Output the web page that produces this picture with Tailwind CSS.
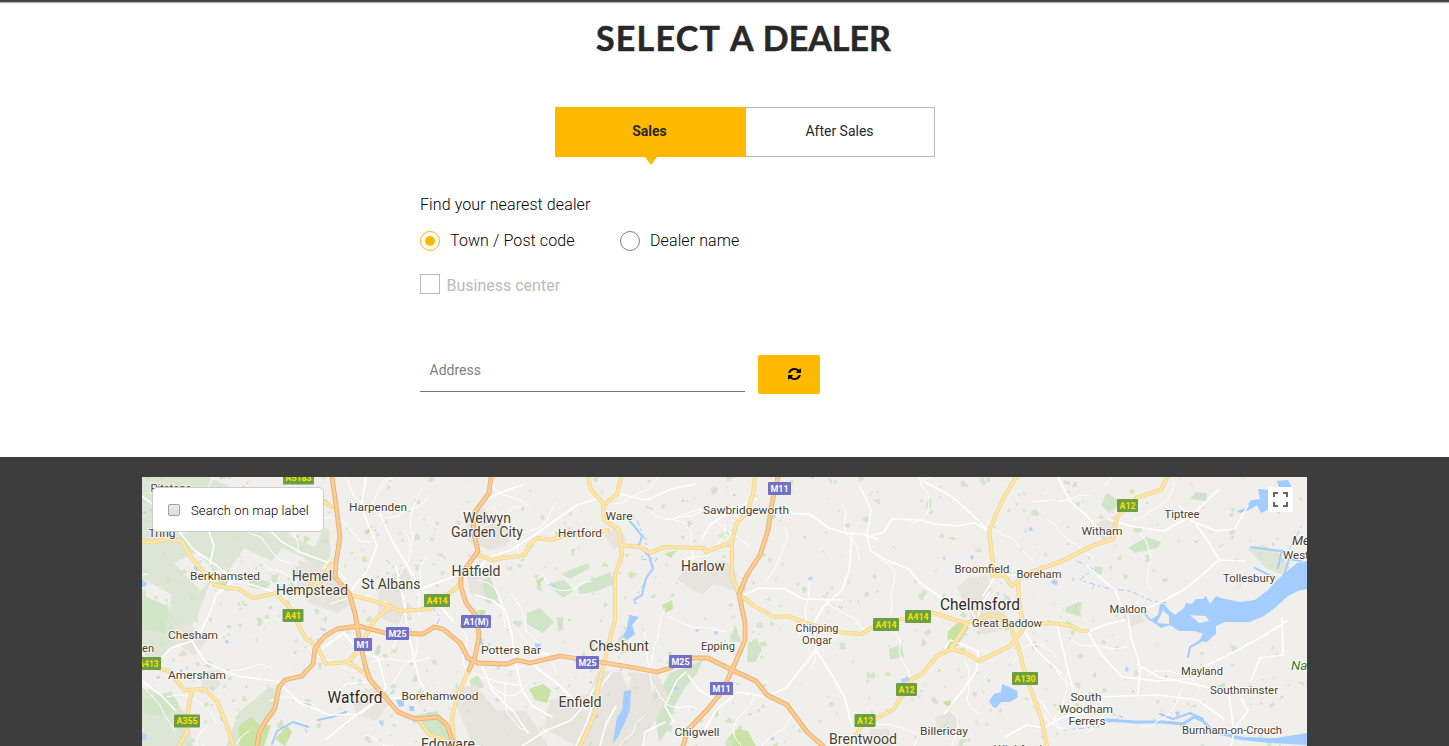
<!DOCTYPE html>
<html lang="en">
<head>
<meta charset="utf-8">
<title>Select a dealer</title>
<script src="https://cdn.jsdelivr.net/npm/@tailwindcss/browser@4"></script>
</head>
<body class="h-[746px] overflow-hidden bg-white font-['Roboto',sans-serif] text-[#282828]">
<div class="h-[4px] border-b border-[#ececec] bg-[#b5b5b5]"><div class="h-[2px] bg-[#444]"></div></div>
<main class="flex h-[453px] flex-col">
  <h1 class="mt-[14px] ml-[596px] h-10 whitespace-nowrap font-['Lato',sans-serif] text-[34px] leading-10 font-bold [word-spacing:2px] [-webkit-text-stroke:0.5px_#282828]"><span class="tracking-[1.2px]">SELECT</span> A DEALER</h1>
  <div class="mt-[49px] ml-[555px] flex h-[50px] w-[380px] text-center text-[14px] leading-[48px]">
    <div class="relative w-[191px] bg-[#ffb900] pr-[2px] font-bold">Sales
      <svg class="absolute top-[50px] left-[90px]" width="12" height="8"><path d="M0 0H12L6 8Z" fill="#ffb900"/></svg>
    </div>
    <div class="flex-1 border border-l-0 border-[#b9b9b9] pr-px leading-[46px]">After Sales</div>
  </div>
  <div class="ml-[420px] w-[400px] text-[16px] leading-6">
    <p class="mt-[36px] font-light tracking-[0.1px] text-black">Find your nearest dealer</p>
    <div class="mt-3 flex items-center font-light tracking-[0.1px] text-black">
      <div class="flex w-[200px] items-center gap-[10px]"><span class="flex size-5 items-center justify-center rounded-full border border-[#ffb900]"><span class="size-[10px] rounded-full bg-[#ffb900]"></span></span>Town / Post code</div>
      <div class="flex items-center gap-[10px] whitespace-nowrap"><span class="size-5 rounded-full border border-[#808080]"></span>Dealer name</div>
    </div>
    <div class="mt-[21px] flex text-[#bbb]"><span class="mr-[6.5px] size-5 border border-[#bbb]"></span>Business center</div>
    <div class="mt-[57px] flex h-[39px] justify-between">
      <div class="h-[37px] w-[325px] border-b border-[#777] pl-[9.5px] text-[14px] leading-[30px] text-[#808080]">Address</div>
      <button class="flex w-[62px] items-center justify-end rounded-[2px] bg-[#ffb900] pr-[19px] pb-px" aria-label="Refresh">
        <svg width="13" height="12" viewBox="0 0 1536 1536" preserveAspectRatio="none"><path fill="#000" d="M1511 928q0 5-1 7-64 268-268 434.500T764 1536q-146 0-282.500-55T238 1324l-129 129q-19 19-45 19t-45-19-19-45V960q0-26 19-45t45-19h448q26 0 45 19t19 45-19 45l-137 137q71 66 161 102t187 36q134 0 250-65t186-179q11-17 53-117 8-23 30-23h192q13 0 22.500 9.500t9.500 22.500zm25-800v448q0 26-19 45t-45 19h-448q-26 0-45-19t-19-45 19-45l138-138Q969 256 768 256q-134 0-250 65T332 500q-11 17-53 117-8 23-30 23H50q-13 0-22.500-9.500T18 608v-7q65-268 270-434.500T768 0q146 0 284 55.500T1297 212l130-129q19-19 45-19t45 19 19 45z"/></svg>
      </button>
    </div>
  </div>
</main>
<section class="h-[289px] bg-[#3d3d3d] pt-5 pl-[142px]">
  <div class="relative h-[269px] w-[1165px] overflow-hidden bg-[#f0efeb]">
    <svg class="block" width="1165" height="269" viewBox="142 477 1165 269" fill="none" stroke-linejoin="round" stroke-linecap="round">
      <!-- woodland and hills -->
      <g fill="#dde6d4">
        <path d="M142 477H208L233 488 283 510 329 530 331 556 320 570 302 557 282 548 272 561 244 548 229 570 215 570 204 598 197 618 184 636 165 655 142 668Z"/>
        <path d="M142 688L169 698 187 714 193 746H142Z"/><path d="M269 687L280 690 276 714 249 746H226L238 713Z"/>
        <path d="M1247 548L1263 545 1277 551 1290 567 1284 576 1266 568Z"/>
      </g>
      <g fill="#f0efeb"><path d="M174 563L198 552 215 573 201 591ZM145 580L171 594 170 610 147 607ZM163 510L182 505 199 527 180 535ZM292 510L323 528 315 547 289 536Z"/></g>
      <g fill="#d0e4c8">
        <path d="M142 595L169 607 166 633 142 629ZM144 701L171 691 180 707 166 718 142 712ZM217 580L229 576 226 591ZM250 575L271 583 266 590 249 587Z"/>
        <path d="M670 673L686 667 703 660 697 673 684 689 675 705 668 730 659 742 656 722 648 711ZM748 643L757 638 762 650 755 662 747 662ZM735 624L741 642 730 642ZM578 588L590 580 610 572 615 583 598 591 579 594ZM561 574L588 563 590 568 570 579ZM547 584L564 580 574 590 563 598ZM527 613L540 608 554 622 543 633 527 624ZM482 580L490 577 498 598 489 604 480 596ZM412 716L437 711 449 730 451 741 427 735ZM1128 548L1146 537 1161 542 1157 548 1135 553ZM1066 607L1079 602 1081 617 1065 612ZM889 649L902 644 904 657 890 660ZM1106 493L1121 501 1110 513 1101 505ZM557 617H563V629L558 632ZM470 680L478 675 484 687 472 691ZM1196 492L1207 493 1206 501 1190 499Z"/>
      </g>
      <g fill="#c8e3a4">
        <path d="M238 727L251 717 261 726 271 725 264 746H240ZM529 689L543 684 551 690 547 703 535 700ZM727 739L737 729 748 731 756 746H726ZM948 631L961 620 969 628 957 646 947 650ZM664 554L677 550 671 558ZM536 580L545 577 538 587ZM662 605L672 600 673 609 665 613ZM275 739L287 725 292 732 285 746ZM477 610L486 610 483 621ZM364 532L373 525 368 535ZM942 702L951 700 951 709ZM1074 605L1082 602 1078 614Z"/>
      </g>
      <!-- built-up areas -->
      <g fill="#e7e4de">
        <path d="M292 572L304 561 335 574 352 603 338 613 309 603ZM379 585L405 566 411 578 401 595 413 607 399 626 378 617ZM466 518L483 508 498 523 513 532 506 546 490 550 468 542ZM466 573L482 574 485 600 471 595ZM604 535L618 525 627 540 614 550ZM677 579L690 562 727 561 737 573 736 591 714 584 702 594 693 590ZM957 587L967 579 987 575 993 592 981 602 962 599ZM966 605L989 606 1005 612 1003 630 981 635 972 620ZM1122 616L1140 613 1145 622 1131 626ZM1095 524L1115 516 1117 538 1102 541ZM550 700L588 694 598 671 620 672 632 695 620 746H575L544 728ZM632 672L658 675 668 696 641 746H620ZM350 697L379 685 392 699 376 721 357 715ZM935 717L950 712 961 721 950 737 937 730ZM870 729L889 729 893 746H867ZM450 690L475 685 496 710 526 711 548 746H473ZM167 630L190 624 208 640 194 656 178 644ZM202 671L220 670 218 689 202 690Z"/>
      </g>
      <g id="patches"></g>
      <!-- water -->
      <g fill="#a3ccff">
        <path d="M1307 561L1297 563 1290 569 1278 579 1268 590 1255 600 1240 602 1221 598 1216 596 1210 604 1206 596 1203 599 1196 599 1192 604 1186 603 1184 608 1175 615 1169 610 1164 604 1160 604 1158 615 1150 620 1161 628 1170 625 1179 631 1195 631 1203 634 1199 641 1207 642 1213 636 1216 634 1216 626 1225 622 1249 622 1264 616 1276 607 1288 596 1298 591 1307 589Z"/>
        <path d="M1237 511L1245 508 1251 500 1260 499 1258 489 1269 490V509L1261 513 1257 505 1251 509 1240 513ZM1277 481L1288 480 1293 489 1280 491Z"/>
        <path d="M989 701L994 694 1001 692 1002 684 1009 687 1017 691 1018 697 1010 702 1001 702 996 708 993 707ZM624 691L631 690 630 710 624 724 618 737 613 743 617 717 622 711ZM396 700L404 699 404 706 399 707ZM409 706H414V711H410Z"/>
        <path d="M629 615L639 617 632 625 635 634 627 640 623 636 627 628ZM1230 735L1245 737 1275 738 1307 733V745L1269 743 1232 739Z"/>
      </g>
      <g fill="#f0efeb"><path d="M1163 610L1169 616 1169 624 1157 623ZM1190 615L1206 616 1209 621 1199 623Z"/></g>
      <g stroke="#a3ccff">
        <path stroke-width="3" d="M1106 720L1135 722 1163 722 1183 724 1194 717 1203 721 1214 732 1232 736"/>
        <path stroke-width="2" d="M624 514L634 526 642 536 639 546 649 556 653 569 646 578 642 595 634 600M1160 714L1173 719 1190 713 1203 719M1201 641L1190 647 1188 657M1150 620L1142 610M1284 575L1289 559 1301 561M1255 568L1275 578M1282 550L1278 568M1251 547L1280 551M272 744L277 731 293 722 308 727M318 720L332 717 346 712"/>
        <path stroke-width="1" stroke-dasharray="5 4 2 4" d="M1077 561L1093 569 1080 580 1106 588 1130 591 1152 601 1168 603M624 514L637 520 648 548 640 560 657 558 646 580 636 597M432 607L440 617 436 627M479 550L475 558M142 514L155 508M386 560L397 570M1064 730L1096 727 1123 717 1112 714M1282 562L1296 537 1301 527"/>
      </g>
      <g id="lanes" stroke="#fff" stroke-width="1"></g>
      <!-- local roads -->
      <g stroke="#fff" stroke-width="1.6">
        <path d="M177 529L194 550 216 565 232 579 269 590 285 598M259 520L282 542 302 553 332 564 345 579M216 595L208 617 201 631 192 641 205 662 237 676 273 681M142 681L162 696 175 710M192 641L171 648 152 668M216 595L229 584 244 573M142 496L168 516 177 529M210 564L214 546 207 526M349 593L367 571 377 546 368 524 361 506 366 477M321 649L344 633 358 650 378 658 386 688 370 705 351 719 326 739M276 680L300 703 330 715 361 714 378 700 413 696"/>
        <path d="M380 514L392 541 407 565 420 588 436 601 453 621M396 566L404 604 408 632 419 680 427 693M420 589L467 572M476 570L492 556 511 550 533 536 557 519 577 505 597 499M475 511L483 500 507 490 523 485M475 595L492 600 505 610 512 634 514 656 522 690 533 706 552 717M482 665L492 690 504 703 513 711 528 733M533 665L558 684 570 696 588 710M594 688L585 705 570 721 547 730 522 746M611 673L597 691 587 722 576 746M616 706L606 724 600 746"/>
        <path d="M620 494L646 500 672 489 695 484M702 538L711 524 734 509 757 499M780 513L809 514 829 528 845 533 862 534 878 539M852 534L849 571 842 590 823 607 814 623M739 597L760 588 785 589 803 599 842 600M814 623L816 650 832 675 845 698 852 727M816 650L805 664 786 688 766 697 738 692 717 709 700 737M674 722L665 706 677 680 686 672M643 746L645 732 665 722M688 675L699 690 718 701M867 537L871 551 884 559 909 569 920 583 943 599 968 605M867 537L884 532 892 519 921 520 934 524 957 526 975 523 988 531M860 486L871 510 867 534M990 532L967 510 951 496 925 482M983 596L996 575 1016 575M969 608L977 621 981 604 990 592"/>
        <path d="M1058 477L1070 501 1091 520 1099 530M1108 519L1130 526 1164 531 1191 516 1219 489M1180 506L1195 523 1210 544 1219 560 1245 561M1219 560L1204 573 1185 589 1163 601 1142 611 1122 607 1115 590 1086 565M1191 521L1217 531 1235 529 1248 505M1128 616L1131 638 1140 666 1138 695M1088 632L1107 624 1125 620M1088 632L1101 654 1122 677 1158 681 1201 678M1138 665L1159 677 1203 686 1229 695 1233 726M1201 668L1230 654 1260 638 1287 621M1282 618L1283 655 1260 658 1251 680M1057 625L1067 666 1073 690M1038 620L1025 632 1036 650 1061 673M944 650L950 640 978 651 977 670 963 690 944 714M1044 728L1027 725 1005 737M1044 728L1060 718 1088 712M1231 746L1235 728 1248 711 1241 698M1096 697L1158 695 1198 700 1224 719"/>
      </g>
      <!-- primary roads: darker casing under a pale fill -->
      <defs><g id="primary">
        <path d="M142 542L156 542 167 539 182 541 191 557 204 573 215 585 229 588 239 589 253 598 276 593 291 609 299 626 306 639 317 646 326 664 348 662 363 672 375 684"/>
        <path d="M348 662L359 650 367 634 375 620 385 611 391 607M349 595L367 599 386 605 400 611 430 609 457 587 461 581M331 563L322 580 308 588 291 593M332 507L317 497 303 489"/>
        <path d="M142 664L169 671 184 690 204 689 217 701 226 723 234 746M192 690L188 710 188 730 179 746"/>
        <path d="M478 555L491 560 525 555 529 545 537 538 552 540 563 536 591 534 608 530M588 477L591 490 603 503 604 520 619 530 622 555 615 575 615 620 607 650 597 693 595 714 580 746M621 478L617 494 604 505M621 545L640 547 650 553 664 547 704 548 706 552 732 542 736 524 747 512 753 494 755 477M732 542L732 576 739 594 754 606 774 617 788 616 803 622 835 632 862 634 877 624 908 618 934 613 965 623 976 620 989 615 1004 617 1011 628 1018 646 1023 666 1031 690 1041 717 1047 746"/>
        <path d="M1016 477L1003 499 989 531 993 563 992 576 1004 575 1012 586 1024 575 1062 561 1092 546 1113 539 1117 517 1138 497 1161 490 1167 477M1018 582L1019 603 1024 628 1010 646 979 661 966 653 951 649 967 624M951 649L937 656 922 674 912 679 894 709 862 726 849 746M1024 626L1047 623 1060 624 1072 626 1081 631 1087 631M469 670L457 697 452 717 454 746M419 721L430 735 444 739"/>
      </g>
      <g id="motorways">
        <path d="M332 477L336 505 340 537 336 562 335 577 349 593 355 613 359 637 365 665 370 680 386 698 398 712 415 719 438 717 447 725 452 740 460 746M257 746L259 733 267 719 275 708 279 687 285 680 302 676 313 664 315 648 325 636 337 629 359 626 385 633 423 634 434 627 443 629 460 643 468 658 478 663 507 664 517 660 530 663 560 656 587 660 630 667 657 672 670 668 687 658 708 658 732 670 756 681 767 695 787 705 807 732 823 746M491 477L489 493 475 512 473 530 478 551 461 575 461 587 466 603 477 617 479 637 475 657 469 670M778 477L772 503 768 530 760 555 747 575 739 594 745 623 745 640 732 670 722 692 707 710 688 730 683 746"/>
      </g></defs>
      <use href="#primary" stroke="#f3d48c" stroke-width="4.2"/>
      <use href="#primary" stroke="#fee6a8" stroke-width="2.6"/>
      <use href="#motorways" stroke="#ecb077" stroke-width="4.8"/>
      <use href="#motorways" stroke="#fbcd90" stroke-width="2.8"/>
      <g id="shields" font-family="Roboto" font-weight="700" font-size="9" text-anchor="middle"></g>
      <g id="labels" font-family="Roboto" text-anchor="middle" stroke="#fff" stroke-opacity=".75" stroke-width="2" paint-order="stroke"></g>
    </svg>
    <div class="absolute top-[10px] left-[10px] flex h-[45px] w-[172px] items-center rounded-[5px] border border-[#ccc] bg-white pl-[15px] text-[13px]">
      <span class="mr-[11px] size-3 rounded-[2px] border border-[#a0a0a0] bg-linear-to-b from-[#ededed] to-[#dcdcdc]"></span><span class="mt-[2px] whitespace-nowrap font-light tracking-[0.1px] text-black">Search on map label</span>
    </div>
    <div class="absolute top-[10px] left-[1126px] flex size-[25px] items-center justify-center bg-white">
      <svg width="15" height="15" fill="none" stroke="#666" stroke-width="2"><path d="M1 5V1H5M10 1H14V5M14 10V14H10M5 14H1V10"/></svg>
    </div>
  </div>
</section>
<script>
const NS = 'http://www.w3.org/2000/svg';
function add(parent, tag, attrs, text) {
  const e = document.createElementNS(NS, tag);
  for (const k in attrs) e.setAttribute(k, attrs[k]);
  if (text) e.textContent = text;
  document.getElementById(parent).appendChild(e);
  return e;
}
// name, centre x, baseline y, rendered width, font size
[['Pitstone',171,492,41,12],['Tring',162,537,27,12],['Harpenden',378,511,58,12],['Welwyn',487,523,48,14],['Garden City',487,537,72,14],['Hertford',580,537,44,12],['Ware',619,520,27,12],['Sawbridgeworth',746,514,86,12],['Berkhamsted',225,580,70,12],['Hemel',312,581,40,14],['Hempstead',312,595,72,14],['St Albans',391,589,59,14],['Hatfield',476,576,49,14],['Harlow',703,571,44,14],['Broomfield',982,573,55,12],['Boreham',1039,578,45,12],['Chelmsford',980,609.5,80,16],['Great Baddow',1007,627,70,12],['Chesham',193,639,50,12],['en',148,652,12,12],['Amersham',197,679,58,12],['Watford',355,703,55,16],['Borehamwood',440,700,77,12],['Potters Bar',511,654,60,12],['Cheshunt',619,651,60,14],['Epping',718,650,34,12],['Chipping',817,632,43,12],['Ongar',817,644,30,12],['Enfield',580,707,43,14],['Edgware',448,749,54,14],['Chigwell',697,736,45,12],['Brentwood',863,744,68,14],['Billericay',944,735,48,12],['South',1086,701,31,12],['Woodham',1086,713,54,12],['Ferrers',1087,725,37,12],['Wickford',1018,756,48,14],['Tiptree',1182,518,35,12],['Witham',1102,535,41,12],['Tollesbury',1249,582,52,12],['Maldon',1128,613,37,12],['Mayland',1202,675,42,12],['Southminster',1244,694,68,12],['Burnham-on-Crouch',1232,734,100,12]]
.forEach(([t,x,y,w,s]) => add('labels','text',{x,y,'font-size':s===12?11.5:s,textLength:w,lengthAdjust:'spacingAndGlyphs',fill:s===16?'#2e281f':'#483f31'},t));
add('labels','text',{x:1292,y:545,'font-size':13,'font-style':'italic','text-anchor':'start',fill:'#483f31'},'Mersea');
add('labels','text',{x:1283,y:559,'font-size':11.5,'text-anchor':'start',fill:'#483f31'},'West Mersea');
add('labels','text',{x:1291,y:670,'font-size':13.5,'font-style':'italic','text-anchor':'start',fill:'#3c7d22'},'National');
// road number, centre x, centre y, width, motorway flag
[['A5183',298.5,478,31,0],['A41',293,615.5,21,0],['A413',148.5,663.5,25,0],['A355',187,721,26,0],['M1',363,644.5,18,1],['M25',397.5,633.5,23,1],['A414',437,600.5,26,0],['A1(M)',476,621.5,30,1],['M25',587.5,662.5,23,1],['M25',680.5,661.5,23,1],['M11',721.5,688.5,23,1],['M11',779.5,488.5,23,1],['A414',886,624.5,26,0],['A414',918,616.5,26,0],['A12',906.5,689.5,21,0],['A12',865,720.5,21,0],['A130',1025,678.5,26,0],['A12',1127.5,505.5,21,0]]
.forEach(([t,x,y,w,m]) => {
  add('shields','rect',{x:x-w/2,y:y-6.5,width:w,height:13,rx:1,fill:m?'#7370c7':'#6a9f43'});
  add('shields','text',{x,y:y+3.3,textLength:w-5,lengthAdjust:'spacingAndGlyphs',fill:m?'#fff':'#fde100'},t);
});
// small woods, ponds and country lanes
let seed = 41;
const rnd = () => (seed = (seed * 16807) % 2147483647) / 2147483647;
for (let i = 0; i < 850; i++) {
  let x = 142 + 1165 * Math.pow(rnd(), 1.15), y = 477 + 269 * rnd(), r = 1 + 4 * rnd() * rnd();
  if (x > 1145 && y > 590 && y < 645) continue;
  let p = [];
  for (let a = 0; a < 8; a++) { const q = r * (0.3 + 1.1 * rnd()); p.push((x + q*Math.cos(a*.785)).toFixed(1) + ',' + (y + q*Math.sin(a*.785)).toFixed(1)); }
  const c = rnd();
  add('patches','polygon',{points:p.join(' '),fill:c<.07?'#b4d5fb':c<.17?'#d0e7b6':'#d2e4ca'});
}
for (let i = 0; i < 85; i++) {
  let x = 142 + 1010 * Math.pow(rnd(), 1.2), y = 477 + 269 * rnd(), a = rnd() * 6.28, d = 'M' + x.toFixed(0) + ' ' + y.toFixed(0);
  for (let k = 0; k < 6; k++) { a += (rnd() - .5) * 1.3; x += 10*Math.cos(a); y += 10*Math.sin(a); d += 'L' + x.toFixed(0) + ' ' + y.toFixed(0); }
  add('lanes','path',{d});
}
</script>
</body>
</html>
